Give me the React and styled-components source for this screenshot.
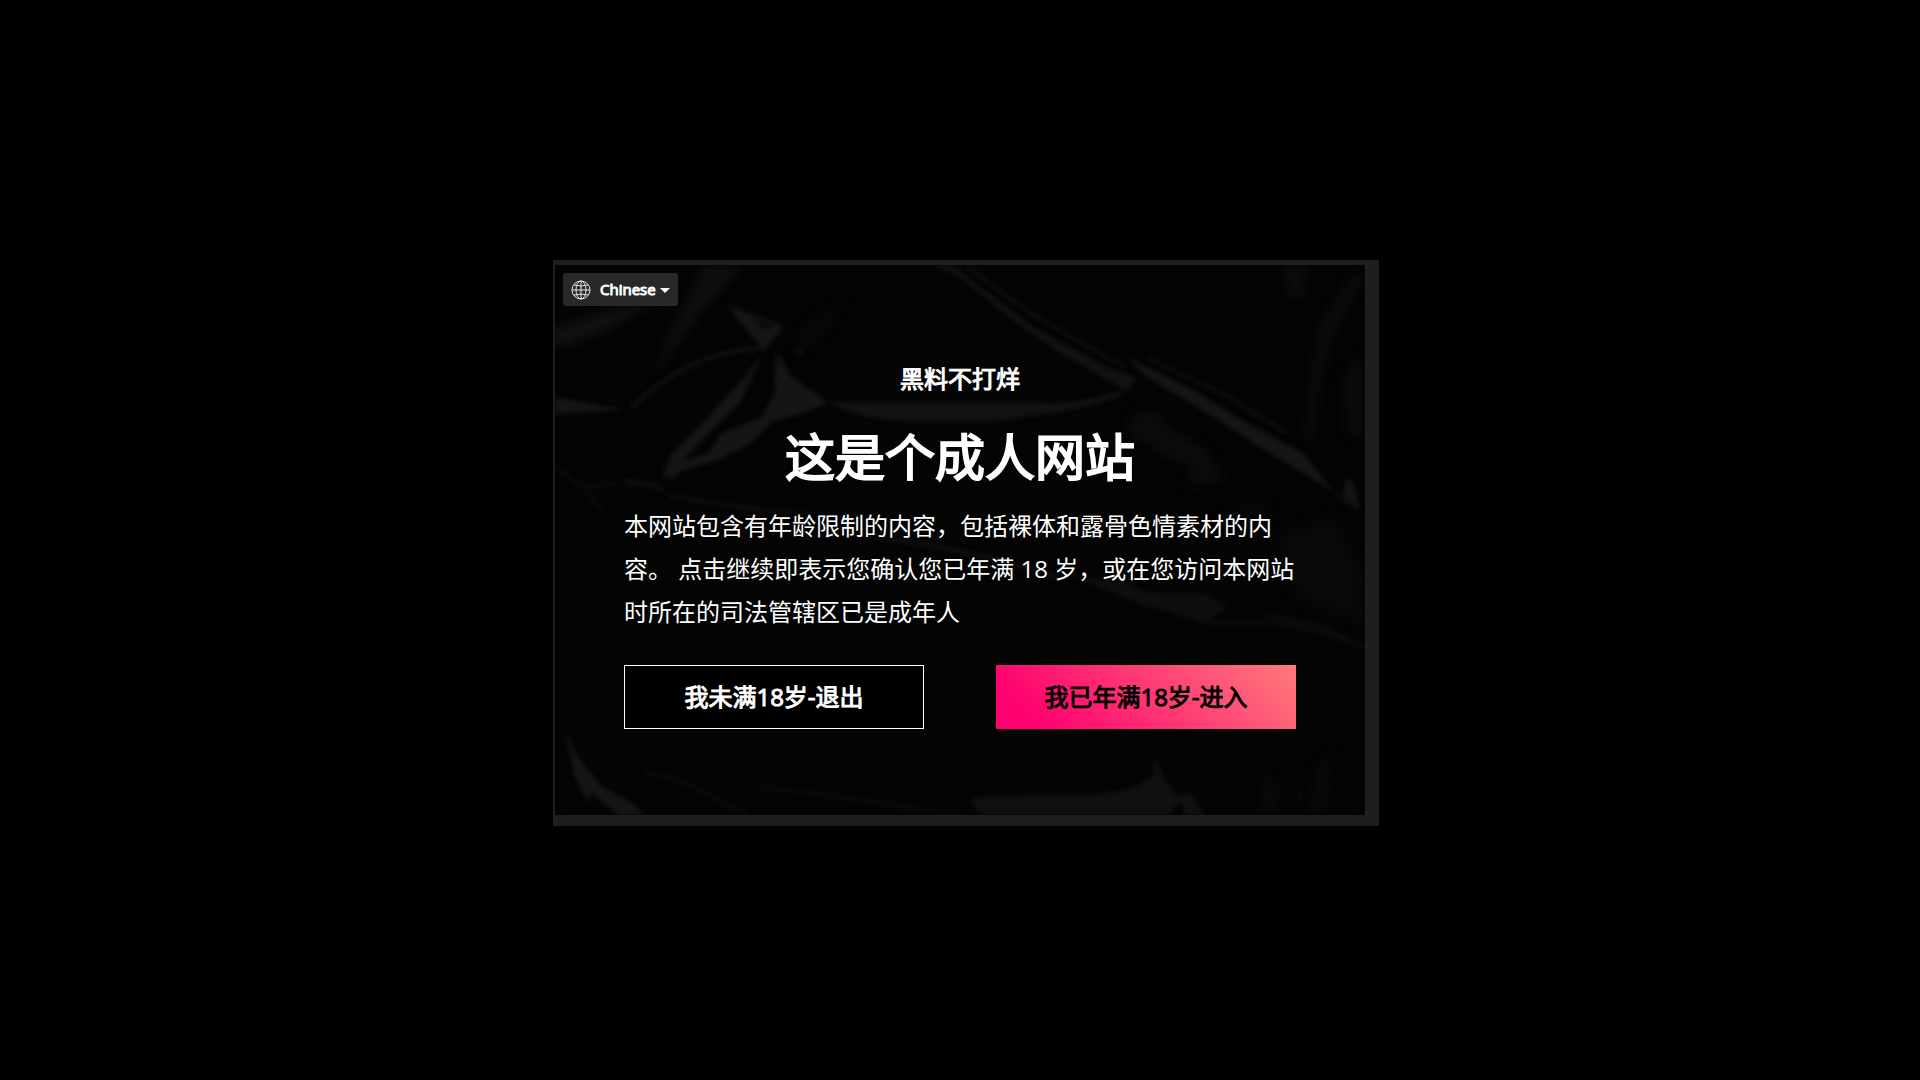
import styled, { createGlobalStyle } from "styled-components";
import { useState } from "react";

export default function App(){

    const [language,setLanguage] = useState("Chinese")

    return(
        <>
        <GlobalStyle/>
        <Screen>
            <Card>
                <Folds/>
                <Language>
                    <Globe/>
                    <select aria-label="Language" value={language} onChange={(e) => setLanguage(e.target.value)}>
                        <option>Chinese</option>
                        <option>English</option>
                    </select>
                    <Caret/>
                </Language>
                <Content>
                    <SiteName>黑料不打烊</SiteName>
                    <Title>这是个成人网站</Title>
                    <Warning>本网站包含有年龄限制的内容，包括裸体和露骨色情素材的内容。 点击继续即表示您确认您已年满 18 岁，或在您访问本网站时所在的司法管辖区已是成年人</Warning>
                    <Actions>
                        <Button type="button">我未满18岁-退出</Button>
                        <Button type="button" $enter>我已年满18岁-进入</Button>
                    </Actions>
                </Content>
            </Card>
        </Screen>
        </>
    )
}

function Globe(){
    return(
        <svg width="20" height="20" viewBox="0 0 20 20" fill="none" stroke="#e6e6e6" strokeWidth="1" aria-hidden="true">
            <circle cx="10" cy="10" r="9"/>
            <ellipse cx="10" cy="10" rx="5" ry="9"/>
            <path d="M10 1v18M1 10h18M3 5q7 2 14 0M3 15q7-2 14 0"/>
        </svg>
    )
}

function Caret(){
    return(
        <svg width="10" height="7" viewBox="0 0 10 7" fill="#fff" aria-hidden="true">
            <path d="M0 2h10L5 7z"/>
        </svg>
    )
}

// crumpled foil behind the text
function Folds(){
    return(
        <Backdrop viewBox="0 0 810 550" preserveAspectRatio="xMidYMid slice" aria-hidden="true">
            <defs>
                <filter id="soft" x="-5%" y="-5%" width="110%" height="110%" colorInterpolationFilters="sRGB"><feGaussianBlur stdDeviation="2"/></filter>
                <filter id="haze" x="-5%" y="-5%" width="110%" height="110%" colorInterpolationFilters="sRGB"><feGaussianBlur stdDeviation="5"/></filter>
            </defs>
            <g filter="url(#haze)" fill="#0b0b0b">
                <path d="M150 0h38L140 54l-40 56 18-50z" fill="#0e0e0e"/>
                <path d="M578 148l20-3 20 20 30 17 24 33-40 7 6-17-33-17-33-20z"/>
                <path d="M810 10l-32 58-13 50-7 56h-8l5-56 10-60 33-48z"/>
                <path d="M728 0h24l-3 35-17-5z"/>
                <path d="M790 110l16-24v90l-14-8z"/>
                <path d="M0 62l70-20 30-6-50 30-50 18z" fill="#111"/>
                <path d="M250 60l40-25-30 45-18 10z" fill="#080808"/>
                <path d="M690 240h30l-60 18z"/>
                <path d="M720 270l60-20 30 60v50l-70-26z" fill="#080808"/>
                <path d="M707 510l20 10-8 30h-12zM760 505l18-20-8 60h-12z" fill="#090909"/>
            </g>
            <g filter="url(#soft)" fill="#151515">
                <path d="M172 40l50 19 6 4-20 24-16-22zM197 53l12 10 12 0z" fillRule="evenodd"/>
                <path d="M207 88l-17 24-40 43-33 33-10 23q5 4 15 0l9-19 25-26 28-27 10-20z"/>
                <path d="M222 88l15 24 36 25-23 11-33 9-20 21-34 17-53 16 13-13 30-10 14-20 40-16 13-24-1-16z"/>
                <path d="M273 137h137l88 1q42-2 73-14l-8 8q-40 14-93 20-32 6-65 5l-60-1q-46-3-72-19z" fill="#121212"/>
                <path d="M377 0h20l81 62 74 40 30 10-10 14-67-38-50-35-50-41z" fill="#121212"/>
                <path d="M572 92l66 33 54 33 56 30 37 47 23 13-43-30-60-36-53-34-60-36z"/>
                <path d="M792 212l6 6 7 27-17-13z"/>
                <path d="M0 132l70 13-70 4z"/>
                <path d="M242 82l8 2-4 6-8-1z" fill="#0e0e0e"/>
                <path d="M70 214l33 4 10 12-20-9-25-2z" fill="#101010"/>
                <path d="M10 467l13 25 24 30 26 13 17 15H63l-26-22-4 10-13-26z"/>
                <path d="M415 534l20-3 97-1 40-5 26-13 2-20 9 22 13 16 14-2 14 22h-20l-4-14-14 14H425z" fill="#101010"/>
                <path d="M500 304l30 8 40 4 20 11 60 2 22 13-22 16-68-20z" fill="#0e0e0e"/>
                <path d="M745 527l5 10-8-8z"/>
            </g>
            <g filter="url(#soft)" fill="none" stroke="#111" strokeWidth="4">
                <path d="M77 143Q130 88 205 83"/>
                <path d="M412 2l66 48 94 54M592 93l80 38 60 37" strokeWidth="3"/>
                <path d="M113 230q80 16 144 18" strokeWidth="3"/>
                <path d="M0 202l27 20 40-4M28 222l22 26" stroke="#0c0c0c" strokeWidth="3"/>
                <path d="M323 273q100 12 180 40"/>
                <path d="M653 358l52-1q60 6 105 26M712 350l56 12 28 14" stroke="#0d0d0d"/>
                <path d="M90 507l34 8 34 17 34 18M204 522q110 12 206 30" stroke="#0b0b0b"/>
            </g>
        </Backdrop>
    )
}

const GlobalStyle = createGlobalStyle`
    * {
        box-sizing: border-box;
    }
    body{
        margin: 0;
        background-color: #000;
        color: #fff;
        font-family: "Open Sans", "Noto Sans CJK SC", sans-serif;
    }
    button, select{
        font-family: inherit;
        cursor: pointer;
    }
`

const Screen = styled.main`
    min-height: 100vh;
    display: flex;
    justify-content: center;
    align-items: center;
    padding: 16px;
`

const Card = styled.section`
    width: 100%;
    max-width: 810px;
    display: flex;
    flex-direction: column;
    position: relative;
    padding: 8px 8px 86px;
    background-color: #030303;
    box-shadow: 6px 3px 0 8px #1e1e1e;
`

const Backdrop = styled.svg`
    position: absolute;
    inset: 0;
    width: 100%;
    height: 100%;
    border-radius: 10px;
    background-color: #040404;
`

const Language = styled.label`
    display: flex;
    align-items: center;
    align-self: flex-start;
    position: relative;
    height: 33px;
    padding: 0 8px;
    border-radius: 3px;
    background-color: #282828;

    select{
        appearance: none;
        width: 60px;
        margin-left: 9px;
        padding: 0 0 1px;
        border: none;
        background: none;
        color: #fff;
        font-size: 15px;
        font-weight: 400;
        -webkit-text-stroke: 1px;
    }
`

const Content = styled.div`
    display: flex;
    flex-direction: column;
    align-items: center;
    position: relative;
    padding: 55px 61px 0;
`

const SiteName = styled.h2`
    margin: 0;
    font-size: 24px;
    line-height: 36px;
    font-weight: 400;
    -webkit-text-stroke: 1px;
`

const Title = styled.h1`
    margin: 23px 0 9px;
    font-size: 50px;
    line-height: 75px;
    font-weight: 400;
    -webkit-text-stroke: 2px;
    text-align: center;
`

const Warning = styled.p`
    margin: 0 0 32px;
    font-size: 24px;
    line-height: 43px;
`

const Actions = styled.div`
    width: 100%;
    display: flex;
    flex-wrap: wrap;
    justify-content: space-between;
    gap: 16px;
`

const Button = styled.button`
    width: 300px;
    height: 64px;
    padding: 0 0 4px;
    border: ${(p) => p.$enter ? "none" : "1px solid #fff"};
    background: ${(p) => p.$enter ? "linear-gradient(45deg, #ff006f 12%, #ff7b7b 100%)" : "#000"};
    color: ${(p) => p.$enter ? "#000" : "#fff"};
    font-size: 24px;
    font-weight: 400;
    -webkit-text-stroke: 1px;
`
